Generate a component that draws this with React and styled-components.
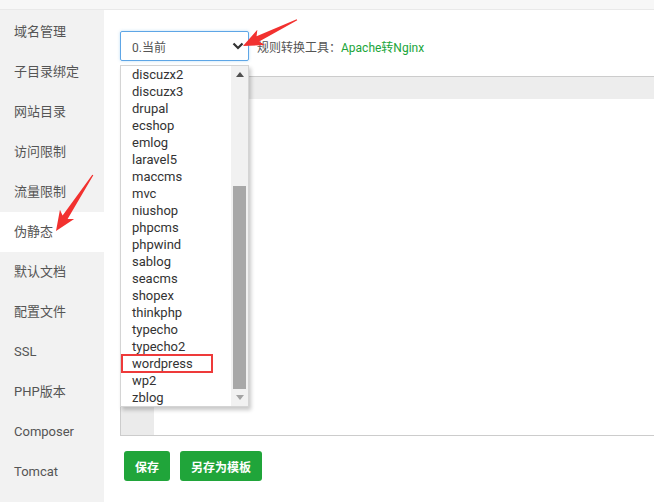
import React from "react";
import styled, { createGlobalStyle } from "styled-components";

const GlobalStyle = createGlobalStyle`
  html, body {
    margin: 0;
    padding: 0;
    width: 654px;
    height: 502px;
    overflow: hidden;
    background: #fff;
    font-family: Roboto, "Noto Sans CJK SC", sans-serif;
  }
`;

const Page = styled.div`
  position: relative;
  width: 654px;
  height: 502px;
  display: flex;
  flex-direction: column;
  overflow: hidden;
`;

const TopStrip = styled.div`
  height: 9px;
  background: #f7f7f7;
  border-bottom: 1px solid #e9e9e9;
`;

const Body = styled.div`
  flex: 1;
  display: flex;
`;

const Sidebar = styled.div`
  width: 104px;
  flex-shrink: 0;
  background: #f2f2f2;
  padding-top: 2px;
`;

const NavItem = styled.div`
  height: 40px;
  line-height: 40px;
  padding-left: 14px;
  font-size: 13px;
  color: #555;
  background: ${(p) => (p.active ? "#fff" : "transparent")};
`;

const Main = styled.div`
  position: relative;
  flex: 1;
  padding: 21px 0 0 16px;
  background: #fff;
`;

const Toolbar = styled.div`
  display: flex;
  align-items: center;
  height: 30px;
  gap: 8px;
`;

const SelectBox = styled.div`
  box-sizing: border-box;
  width: 129px;
  height: 30px;
  border: 1px solid #5ea6e6;
  border-radius: 2px;
  box-shadow: 0 0 3px rgba(102, 175, 233, 0.45);
  padding: 0 4px 0 11px;
  display: flex;
  align-items: center;
  justify-content: space-between;
  font-size: 12px;
  color: #555;
`;

const Label = styled.span`
  font-size: 12px;
  color: #555;
`;

const Link = styled.span`
  color: #20a53a;
`;

const Dropdown = styled.div`
  position: absolute;
  top: 55px;
  left: 16px;
  box-sizing: border-box;
  width: 129px;
  height: 342px;
  background: #fff;
  border: 1px solid #d4d4d4;
  box-shadow: 2px 3px 4px rgba(0, 0, 0, 0.22);
  display: flex;
  z-index: 5;
`;

const OptionList = styled.div`
  flex: 1;
`;

const Option = styled.div`
  box-sizing: border-box;
  height: ${(p) => (p.marked ? "19px" : "17px")};
  line-height: ${(p) => (p.marked ? "19px" : "17px")};
  margin: ${(p) => (p.marked ? "-1px 0" : "0")};
  width: ${(p) => (p.marked ? "92px" : "auto")};
  padding-left: 11px;
  font-size: 13px;
  color: #333;
  box-shadow: ${(p) => (p.marked ? "inset 0 0 0 2px #ee3a3a" : "none")};
`;

const Scrollbar = styled.div`
  width: 17px;
  background: #f1f1f1;
  display: flex;
  flex-direction: column;
`;

const ScrollArrow = styled.div`
  height: 17px;
  display: flex;
  align-items: center;
  justify-content: center;
`;

const ScrollTrack = styled.div`
  flex: 1;
  padding: 0 2px;
`;

const Thumb = styled.div`
  margin-top: 103px;
  height: 203px;
  background: #a8a8a8;
`;

const Editor = styled.div`
  margin-top: 15px;
  width: 560px;
  height: 360px;
  box-sizing: border-box;
  border: 1px solid #cccccc;
  display: flex;
`;

const Gutter = styled.div`
  width: 33px;
  background: #ebebeb;
`;

const Content = styled.div`
  flex: 1;
`;

const ActiveLine = styled.div`
  height: 22px;
  background: #ededed;
`;

const Buttons = styled.div`
  margin-top: 15px;
  padding-left: 4px;
  display: flex;
  gap: 10px;
`;

const Button = styled.button`
  height: 30px;
  padding: 0 11px;
  border: none;
  border-radius: 3px;
  background: #20a53a;
  color: #fff;
  font-family: inherit;
  font-size: 12px;
  font-weight: 600;
`;

const Overlay = styled.svg`
  position: absolute;
  top: 0;
  left: 0;
  pointer-events: none;
  z-index: 10;
`;

const navItems = [
  "域名管理", "子目录绑定", "网站目录", "访问限制", "流量限制", "伪静态",
  "默认文档", "配置文件", "SSL", "PHP版本", "Composer", "Tomcat",
];

const options = [
  "discuzx2", "discuzx3", "drupal", "ecshop", "emlog", "laravel5", "maccms",
  "mvc", "niushop", "phpcms", "phpwind", "sablog", "seacms", "shopex",
  "thinkphp", "typecho", "typecho2", "wordpress", "wp2", "zblog",
];

const Arrow = ({ x, y, angle, length }) => (
  <polygon
    transform={`translate(${x} ${y}) rotate(${angle})`}
    points={`0,0 20,-8.5 16.5,-3 ${length},-0.8 ${length},0.4 16.5,3 20,8.5`}
    fill="#f2312f"
  />
);

const App = () => (
  <Page>
    <GlobalStyle />
    <TopStrip />
    <Body>
      <Sidebar>
        {navItems.map((n) => (
          <NavItem key={n} active={n === "伪静态"}>{n}</NavItem>
        ))}
      </Sidebar>
      <Main>
        <Toolbar>
          <SelectBox>
            <span>0.当前</span>
            <svg width="12" height="8" viewBox="0 0 12 8">
              <polyline points="1.5,1.5 6,6 10.5,1.5" fill="none" stroke="#333" strokeWidth="2.2" />
            </svg>
          </SelectBox>
          <Label>
            规则转换工具：<Link>Apache转Nginx</Link>
          </Label>
        </Toolbar>
        <Dropdown>
          <OptionList>
            {options.map((o) => (
              <Option key={o} marked={o === "wordpress"}>{o}</Option>
            ))}
          </OptionList>
          <Scrollbar>
            <ScrollArrow>
              <svg width="8" height="5" viewBox="0 0 8 5"><polygon points="0,5 4,0 8,5" fill="#505050" /></svg>
            </ScrollArrow>
            <ScrollTrack>
              <Thumb />
            </ScrollTrack>
            <ScrollArrow>
              <svg width="8" height="5" viewBox="0 0 8 5"><polygon points="0,0 8,0 4,5" fill="#a3a3a3" /></svg>
            </ScrollArrow>
          </Scrollbar>
        </Dropdown>
        <Editor>
          <Gutter />
          <Content>
            <ActiveLine />
          </Content>
        </Editor>
        <Buttons>
          <Button>保存</Button>
          <Button>另存为模板</Button>
        </Buttons>
      </Main>
    </Body>
    <Overlay width="654" height="502" viewBox="0 0 654 502">
      <Arrow x={243} y={46} angle={-25.7} length={60} />
      <Arrow x={56} y={231} angle={-56.5} length={67} />
    </Overlay>
  </Page>
);

export default App;
